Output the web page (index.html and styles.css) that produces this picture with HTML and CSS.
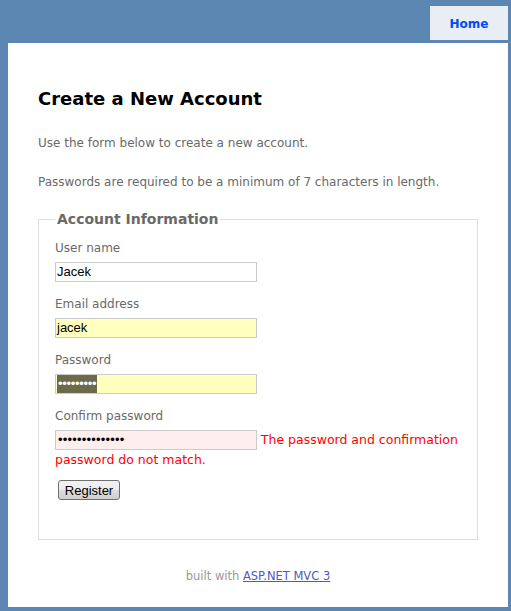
FILE: index.html
```html
<!DOCTYPE html>
<html>
<head>
<meta charset="utf-8">
<title>Register</title>
<link rel="stylesheet" href="styles.css">
</head>
<body>
<div class="page">
  <div class="header">
    <ul class="menu">
      <li><a href="#" class="menu-link">Home</a></li>
    </ul>
  </div>
  <div class="main">
    <h2 class="title">Create a New Account</h2>
    <p class="intro">Use the form below to create a new account.</p>
    <p class="intro">Passwords are required to be a minimum of 7 characters in length.</p>
    <fieldset class="account">
      <legend class="legend">Account Information</legend>
      <div class="editor-label first">User name</div>
      <div class="editor-field"><div class="box">Jacek</div></div>
      <div class="editor-label">Email address</div>
      <div class="editor-field"><div class="box autofill">jacek</div></div>
      <div class="editor-label">Password</div>
      <div class="editor-field"><div class="box autofill"><span class="sel">•••••••••</span></div></div>
      <div class="editor-label">Confirm password</div>
      <div class="editor-field"><div class="box invalid dots">••••••••••••••</div> <span class="field-error">The password and confirmation password do not match.</span></div>
      <p class="actions"><button class="register" type="button">Register</button></p>
    </fieldset>
    <div class="footer">built with <a href="#" class="footer-link">ASP.NET MVC 3</a></div>
  </div>
</div>
</body>
</html>
```
FILE: styles.css
```css
html, body {
  margin: 0;
  padding: 0;
}
body {
  background: #5c87b2;
  font-family: "DejaVu Sans", Verdana, sans-serif;
  font-size: 12px;
  color: #696969;
}
.page {
  padding: 6px 3px 4px 8px;
  width: 500px;
}
.header {
  display: flex;
  justify-content: flex-end;
  height: 34px;
  margin-bottom: 3px;
}
.menu {
  list-style: none;
  margin: 0;
  padding: 0;
  display: flex;
}
.menu li {
  display: flex;
}
.menu-link {
  display: flex;
  align-items: center;
  justify-content: center;
  width: 78px;
  height: 34px;
  padding-top: 1px;
  box-sizing: border-box;
  background: #e8eef4;
  color: #034af3;
  font-weight: bold;
  font-size: 12px;
  text-decoration: none;
}
.main {
  background: #fff;
  height: 564px;
  box-sizing: border-box;
  padding: 45px 30px 0 30px;
}
.title {
  margin: 0 0 25px 0;
  font-size: 18px;
  line-height: 22px;
  color: #000;
}
.intro {
  margin: 0 0 23px 0;
  line-height: 16px;
}
.intro + .intro {
  margin-bottom: 20px;
}
.account {
  margin: 0;
  border: 1px solid #ddd;
  padding: 0 16px 39px 16px;
}
.legend {
  font-size: 14px;
  font-weight: bold;
  padding: 0 2px 0 2px;
  line-height: 18px;
  color: #696969;
}
.editor-label {
  line-height: 16px;
  margin-top: 14px;
  margin-bottom: 6px;
}
.editor-label.first {
  margin-top: 12px;
}
.editor-field {
  line-height: 19px;
}
.box {
  display: inline-block;
  vertical-align: top;
  box-sizing: border-box;
  width: 202px;
  height: 20px;
  border: 1px solid #ccc;
  background: #fff;
  color: #000;
  font-family: "Liberation Sans", Arial, sans-serif;
  font-size: 13px;
  line-height: 18px;
  padding: 0 1px;
  overflow: hidden;
  white-space: nowrap;
}
.autofill {
  background: #ffffc0;
}
.sel {
  display: inline-block;
  vertical-align: top;
  background: #6b6b4b;
  color: #fff;
  font-size: 13px;
  line-height: 18px;
  height: 18px;
  padding: 0 1px 0 1px;
  letter-spacing: -0.3px;
}
.invalid {
  background: #ffeeee;
}
.dots {
  font-size: 13px;
  letter-spacing: 0.2px;
  padding-left: 2px;
}
.field-error {
  color: #ff0000;
  font-size: 12.5px;
}
.actions {
  margin: 10px 0 0 0;
}
.register {
  margin: 0 0 0 3px;
  width: 62px;
  height: 20px;
  padding: 0;
  font-family: "Liberation Sans", Arial, sans-serif;
  font-size: 13px;
  color: #000;
  border: 1px solid #707070;
  border-radius: 3px;
  background: linear-gradient(#f2f2f2 0%, #ebebeb 50%, #dddddd 51%, #cfcfcf 100%);
}
.footer {
  text-align: center;
  margin-top: 29px;
  color: #999;
  font-size: 11.5px;
}
.footer-link {
  color: #505abc;
}
```
